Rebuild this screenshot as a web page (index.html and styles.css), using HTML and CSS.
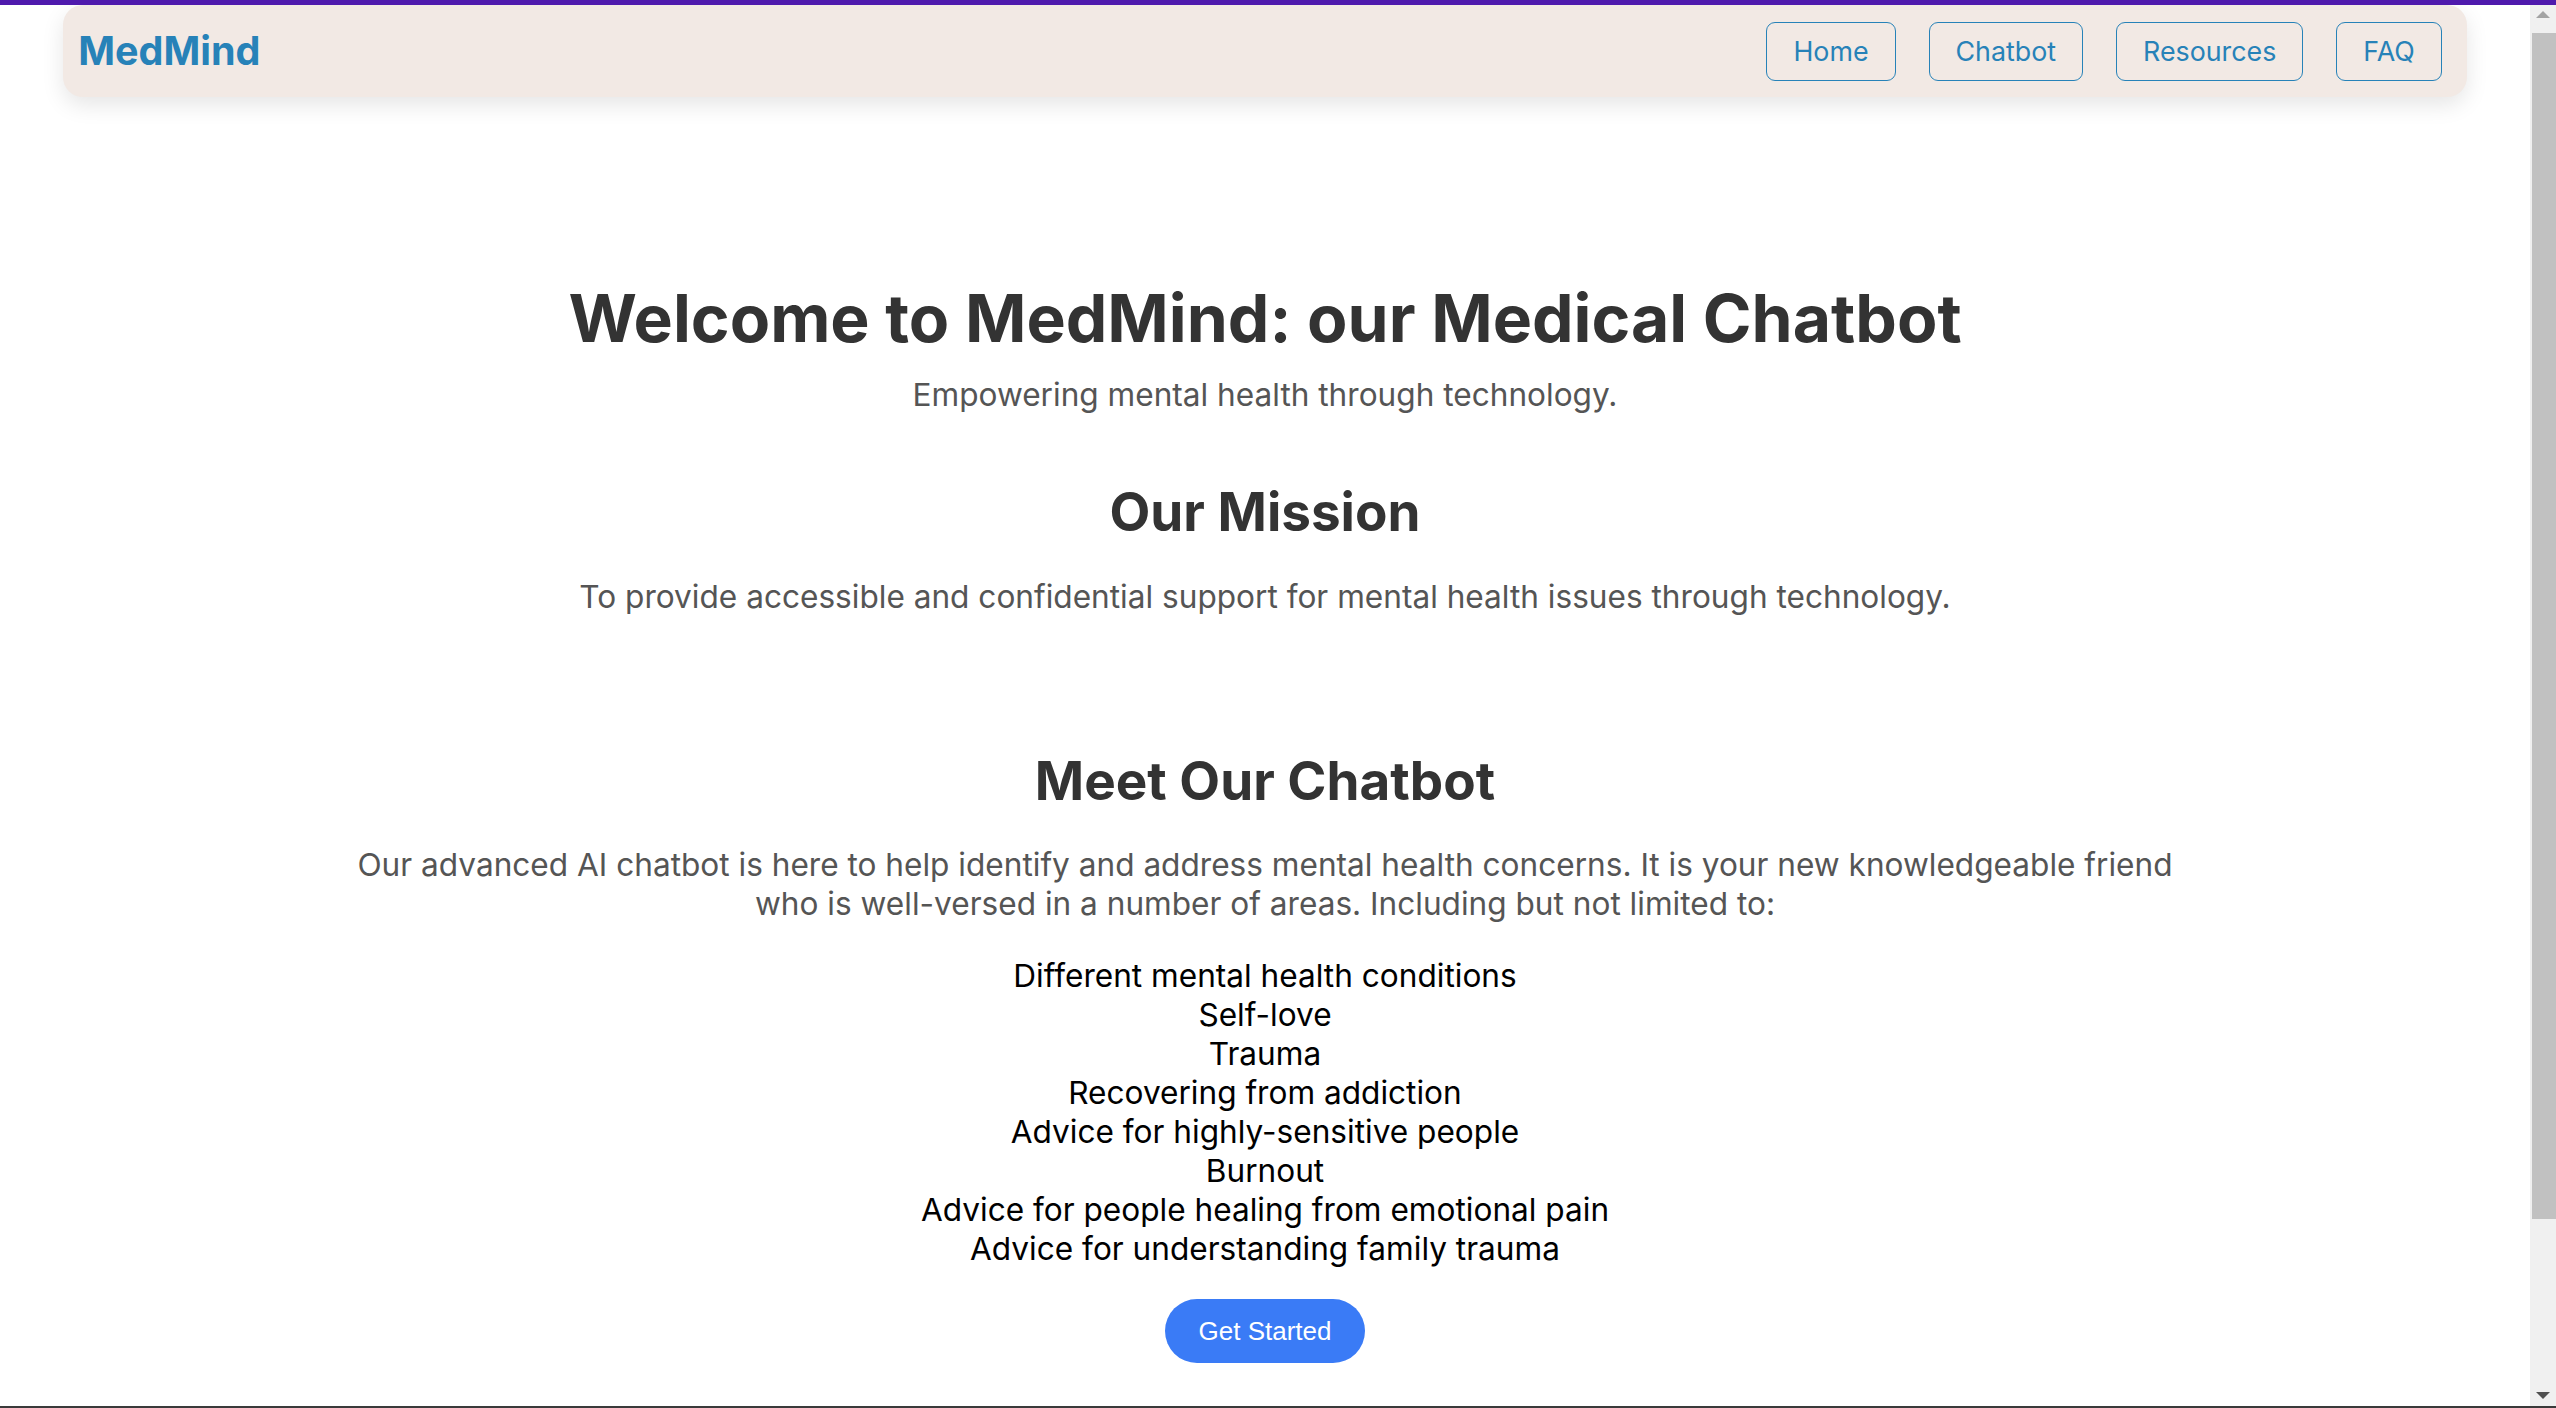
FILE: index.html
```html
<!DOCTYPE html>
<html lang="en">
<head>
<meta charset="utf-8">
<title>MedMind</title>
<link rel="stylesheet" href="styles.css">
</head>
<body>
<header class="navbar">
  <a class="logo" href="#">MedMind</a>
  <nav class="nav-links">
    <a class="nav-btn" href="#">Home</a>
    <a class="nav-btn" href="#">Chatbot</a>
    <a class="nav-btn" href="#">Resources</a>
    <a class="nav-btn" href="#">FAQ</a>
  </nav>
</header>
<main class="content">
  <section class="hero">
    <h1 class="hero-title">Welcome to MedMind: our Medical Chatbot</h1>
    <p class="tagline">Empowering mental health through technology.</p>
  </section>
  <section class="mission">
    <h2 class="section-title">Our Mission</h2>
    <p class="section-text">To provide accessible and confidential support for mental health issues through technology.</p>
  </section>
  <section class="chatbot">
    <h2 class="section-title">Meet Our Chatbot</h2>
    <p class="section-text">Our advanced AI chatbot is here to help identify and address mental health concerns. It is your new knowledgeable friend who is well-versed in a number of areas. Including but not limited to:</p>
    <ul class="topics">
      <li>Different mental health conditions</li>
      <li>Self-love</li>
      <li>Trauma</li>
      <li>Recovering from addiction</li>
      <li>Advice for highly-sensitive people</li>
      <li>Burnout</li>
      <li>Advice for people healing from emotional pain</li>
      <li>Advice for understanding family trauma</li>
    </ul>
    <button class="cta" type="button">Get Started</button>
  </section>
</main>
<div class="scrollbar" aria-hidden="true">
  <span class="arrow arrow-up"></span>
  <span class="thumb"></span>
  <span class="arrow arrow-down"></span>
</div>
<div class="window-edge" aria-hidden="true"></div>
</body>
</html>
```

FILE: styles.css
```css
html {
  margin: 0;
  padding: 0;
  border-top: 5px solid #4f1aad;
  background: #ffffff;
}

body {
  margin: 0 26px 0 0;
  padding: 0;
  background: #ffffff;
  font-family: Inter, "Noto Sans", sans-serif;
  color: #333333;
}

.navbar {
  width: 95%;
  height: 92px;
  margin: 0 auto;
  box-sizing: border-box;
  display: flex;
  align-items: center;
  justify-content: space-between;
  padding: 0 25px 0 15px;
  background: #f2e9e4;
  border-radius: 20px;
  box-shadow: 0 8px 22px rgba(0, 0, 0, 0.1);
}

.logo {
  font-size: 39.5px;
  font-weight: 700;
  color: #2782b8;
  text-decoration: none;
}

.nav-links {
  display: flex;
  gap: 33px;
}

.nav-btn {
  display: block;
  font-size: 26.8px;
  line-height: 33px;
  padding: 12px 26px;
  color: #2782b8;
  text-decoration: none;
  border: 1.6px solid #2782b8;
  border-radius: 9px;
}

.content {
  display: flex;
  flex-direction: column;
  align-items: center;
  text-align: center;
  padding-bottom: 248px;
}

.hero, .mission, .chatbot {
  display: flex;
  flex-direction: column;
  align-items: center;
}

.hero-title {
  margin: 182px 0 0;
  font-size: 66px;
  line-height: 78px;
  font-weight: 700;
  color: #333333;
}

.tagline {
  margin: 18px 0 0;
  font-size: 31.6px;
  line-height: 39px;
  color: #555555;
}

.section-title {
  margin: 0;
  font-size: 53px;
  line-height: 62px;
  font-weight: 700;
  color: #333333;
}

.mission {
  margin-top: 67px;
}

.chatbot {
  margin-top: 134px;
}

.section-text {
  margin: 34px 0 0;
  max-width: 1860px;
  font-size: 31.6px;
  line-height: 39px;
  color: #555555;
}

.chatbot .section-text {
  margin-top: 33px;
}

.topics {
  list-style: none;
  margin: 33px 0 0;
  padding: 0;
  font-size: 31.6px;
  line-height: 39px;
  color: #000000;
}

.cta {
  margin-top: 31px;
  padding: 17px 34px;
  font-family: "Liberation Sans", Arial, sans-serif;
  font-size: 26px;
  line-height: 30px;
  color: #ffffff;
  background: #3a7bf6;
  border: none;
  border-radius: 40px;
  cursor: pointer;
}

.scrollbar {
  position: fixed;
  top: 5px;
  right: 0;
  bottom: 0;
  width: 26px;
  background: #f0f0f0;
}

.thumb {
  position: absolute;
  top: 28px;
  left: 2px;
  right: 0;
  height: 1186px;
  background: #c1c1c1;
}

.arrow {
  position: absolute;
  left: 6px;
  width: 0;
  height: 0;
  border-left: 7px solid transparent;
  border-right: 7px solid transparent;
}

.arrow-up {
  top: 6px;
  border-bottom: 7px solid #a3a3a3;
}

.arrow-down {
  bottom: 9px;
  border-top: 7px solid #505050;
}

.window-edge {
  position: fixed;
  left: 0;
  right: 0;
  bottom: 0;
  height: 2px;
  background: #3a3a3a;
}
```
